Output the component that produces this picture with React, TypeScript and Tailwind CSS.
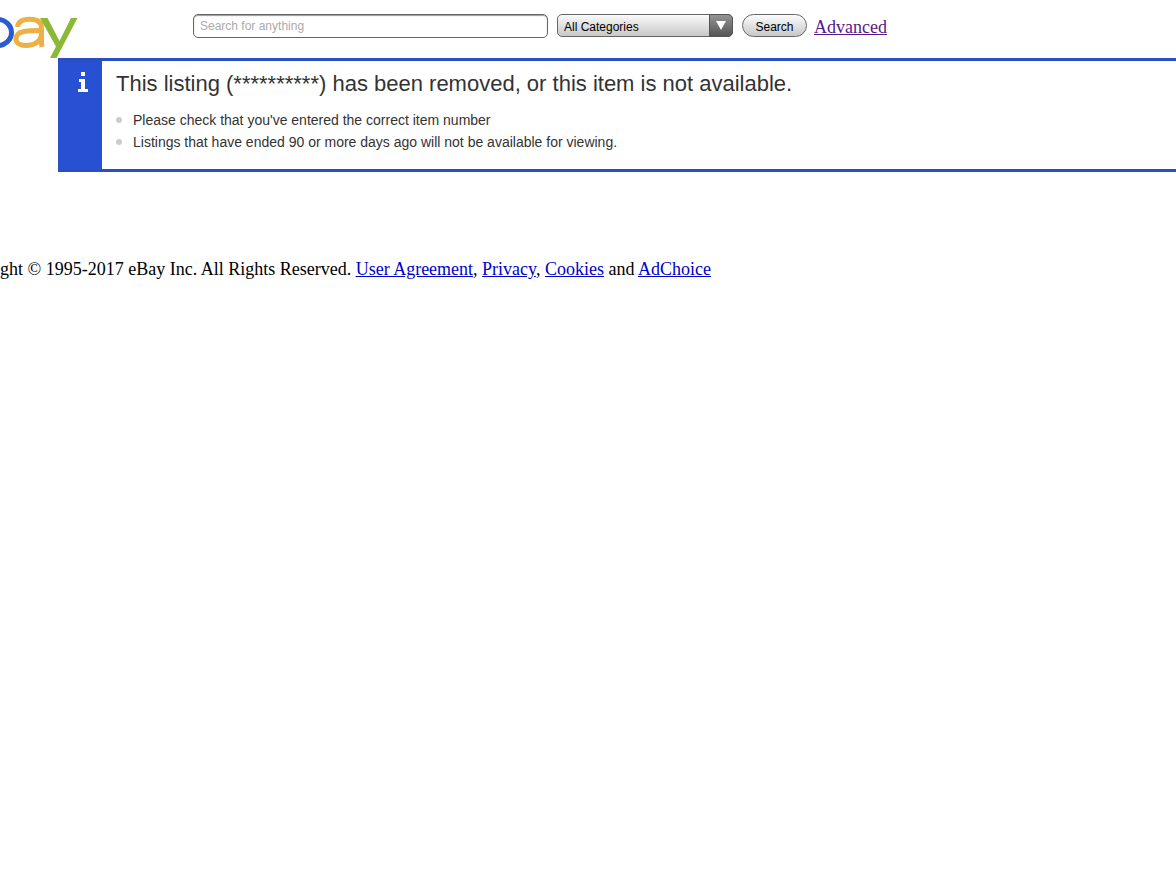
const legalLinks = "text-[#0000cc] underline";

function Logo() {
  return (
    <svg viewBox="0 0 78 60" className="h-[60px] w-[78px] shrink-0" role="img" aria-label="eBay">
      <ellipse cx="-3" cy="32.5" rx="14.5" ry="13.2" fill="none" stroke="#2a5bd0" strokeWidth="5" />
      <g fill="none" stroke="#ecb045" strokeWidth="5">
        <path d="M17.5 27 C18 21 23 19.2 29.5 19.2 C37 19.2 41.5 21.5 41.5 27.5 V39 Q41.500 44 42 47" />
        <path d="M41.500 30.500 C29 30.500 16 30.500 16 38.500 C16 43.500 20.500 45.600 26 45.600 C35 45.600 41.500 41 41.500 33" />
      </g>
      <path d="M40 18 H47.500 L59.500 41 L71 18 H77.500 L56.500 58 H50 L56 46.500 Z" fill="#8bb837" />
    </svg>
  );
}

function SearchBar() {
  return (
    <form className="flex items-start pt-3.5 font-['Liberation_Sans',sans-serif] text-xs" onSubmit={(e) => e.preventDefault()}>
      <input
        type="search"
        aria-label="Search for anything"
        placeholder="Search for anything"
        className="mr-[9px] h-6 w-[355px] appearance-none rounded-[5px] border border-[#666] bg-white px-1.5 shadow-[inset_0_1px_1px_#999] outline-none placeholder:text-[#aaa]"
      />
      <div className="relative mr-[9px]">
        <select
          aria-label="Category"
          className="h-[23px] w-44 appearance-none rounded-[5px] border border-[#666] bg-linear-to-b from-[#fafafa] to-[#c8c8c8] pt-0.5 pr-7 pl-1.5 text-black"
        >
          <option>All Categories</option>
        </select>
        <span className="pointer-events-none absolute inset-y-0 right-0 flex w-6 items-center justify-center rounded-r-[5px] border border-[#555] bg-linear-to-b from-[#949494] to-[#565656]">
          <svg viewBox="0 0 10 9" className="h-[9px] w-2.5" aria-hidden="true">
            <path d="M0 0H10L5 9Z" fill="white" />
          </svg>
        </span>
      </div>
      <button
        type="submit"
        className="mr-[7px] h-[23px] w-[65px] rounded-full border border-[#666] bg-linear-to-b from-[#fcfcfc] to-[#c8c8c8] pt-0.5 text-black"
      >
        Search
      </button>
      <a href="#advanced" className="font-['Liberation_Serif',serif] text-lg leading-[26px] text-[#551a8b] underline">
        Advanced
      </a>
    </form>
  );
}

function Notice() {
  return (
    <section className="ml-[58px] flex min-h-[114px] border-y-3 border-l border-[#2a4fc4] bg-white font-['Liberation_Sans',sans-serif] text-[#333]">
      <div className="flex w-[43px] shrink-0 justify-center bg-[#2850d2] pt-[11px] pl-1">
        <svg viewBox="0 0 10 20" className="h-5 w-2.5" fill="white" role="img" aria-label="Information">
          <path d="M3 0H7V4H3ZM1 7H7V17H10V20H0V17H3V10H1Z" />
        </svg>
      </div>
      <div className="pt-2 pl-3.5">
        <h1 className="text-[22px] leading-[30px]">
          This listing (**********) has been removed, or this item is not available.
        </h1>
        <ul className="pt-2.5 text-sm leading-[22px]">
          {[
            "Please check that you've entered the correct item number",
            "Listings that have ended 90 or more days ago will not be available for viewing.",
          ].map((text) => (
            <li key={text} className="flex items-center gap-[11px]">
              <span className="size-1.5 rounded-full bg-[#ccc]" />
              {text}
            </li>
          ))}
        </ul>
      </div>
    </section>
  );
}

export default function App() {
  return (
    <div className="min-h-screen overflow-x-hidden bg-white">
      <header className="flex h-[58px] items-start gap-[115px]">
        <Logo />
        <SearchBar />
      </header>
      <main>
        <Notice />
      </main>
      <footer className="pt-[85px] font-['Liberation_Serif',serif] text-lg leading-6 text-black">
        ght © 1995-2017 eBay Inc. All Rights Reserved.{" "}
        <a href="#agreement" className={legalLinks}>User Agreement</a>,{" "}
        <a href="#privacy" className={legalLinks}>Privacy</a>,{" "}
        <a href="#cookies" className={legalLinks}>Cookies</a> and{" "}
        <a href="#adchoice" className={legalLinks}>AdChoice</a>
      </footer>
    </div>
  );
}
